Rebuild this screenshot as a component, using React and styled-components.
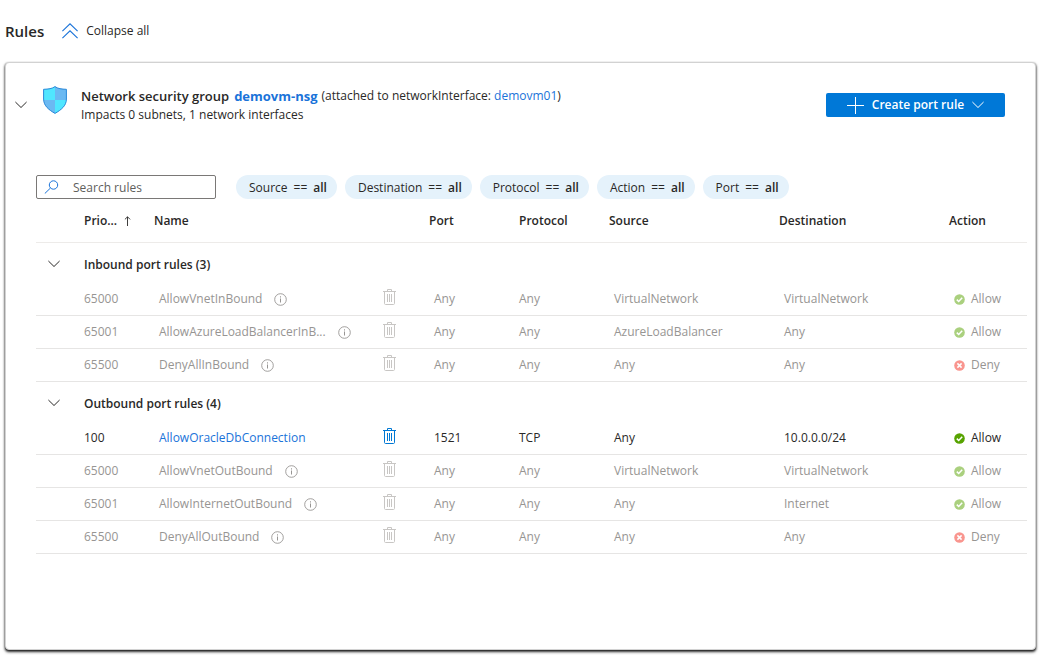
import { Fragment, useState } from 'react';
import { createGlobalStyle, styled } from 'styled-components';

const GlobalStyle = createGlobalStyle`
  *, *::before, *::after {
    box-sizing: border-box;
  }

  body {
    margin: 0;
    background: #fff;
    color: #292827;
    font-family: 'Open Sans', 'Noto Sans', sans-serif;
    font-size: 12px;
    line-height: 18px;
  }

  button, input {
    font: inherit;
    color: inherit;
  }

  svg {
    display: block;
    flex-shrink: 0;
  }
`;

const Page = styled.main`
  display: flex;
  flex-direction: column;
  min-height: 100vh;
  padding: 0 5px 5px;
`;

const TopBar = styled.header`
  display: flex;
  align-items: center;
  gap: 18px;
  height: 61px;
  margin-bottom: 1px;
`;

const Title = styled.h1`
  margin: 0;
  font-size: 15px;
  font-weight: 600;
`;

const PlainButton = styled.button`
  display: inline-flex;
  align-items: center;
  gap: 8px;
  padding: 0;
  border: none;
  background: none;
  cursor: pointer;

  &:disabled {
    cursor: default;
  }
`;

const Card = styled.section`
  flex: 1;
  padding: 23px 8px 24px 9px;
  border: 1px solid #d2d2d2;
  border-radius: 4px;
  background: #fff;
  box-shadow: 0 1px 2px rgba(0, 0, 0, 0.6), 0 2px 3px rgba(0, 0, 0, 0.75);
`;

const GroupHeader = styled.div`
  display: flex;
  align-items: flex-start;
  padding-right: 22px;
`;

const ExpandButton = styled(PlainButton)`
  height: 38px;
  margin-right: 16px;
`;

const GroupText = styled.div`
  flex: 1;
  margin-left: 14px;
`;

const GroupTitle = styled.h2`
  display: flex;
  flex-wrap: wrap;
  column-gap: 4px;
  margin: 0;
  font-size: 12px;
  font-weight: 400;
  line-height: 20px;
`;

const GroupName = styled.strong`
  display: flex;
  gap: 5px;
  font-size: 13px;
  font-weight: 600;
`;

const GroupSummary = styled.p`
  margin: 0;
`;

const Link = styled.a`
  color: #1a73d9;
  text-decoration: none;

  &:hover {
    text-decoration: underline;
  }
`;

const StrongLink = styled(Link)`
  font-weight: 700;
`;

const CreateButton = styled.button`
  display: flex;
  align-items: center;
  justify-content: center;
  gap: 8px;
  width: 179px;
  height: 24px;
  margin-top: 7px;
  padding: 0;
  border: none;
  border-radius: 2px;
  background: #0078d7;
  color: #fff;
  font-weight: 600;
  cursor: pointer;
`;

const RulesArea = styled.div`
  padding: 51px 0 0 21px;
`;

const Toolbar = styled.div`
  display: flex;
  flex-wrap: wrap;
  gap: 8px;
`;

const SearchBox = styled.label`
  display: flex;
  align-items: center;
  gap: 14px;
  width: 180px;
  height: 24px;
  margin-right: 12px;
  padding: 0 7px;
  border: 1px solid #7a7876;
  border-radius: 2px;
`;

const SearchInput = styled.input`
  flex: 1;
  min-width: 0;
  padding: 2px 0 0;
  border: none;
  outline: none;
  background: none;

  &::placeholder {
    color: #605e5c;
    opacity: 1;
  }
`;

const Pill = styled.button`
  display: flex;
  align-items: center;
  gap: 6px;
  height: 24px;
  padding: 2px 10px 0 13px;
  border: none;
  border-radius: 12px;
  background: #e5f2fb;
  cursor: pointer;

  strong {
    font-weight: 600;
  }
`;

const Table = styled.table`
  width: 100%;
  border-collapse: separate;
  border-spacing: 0;
  table-layout: fixed;
`;

const Col = styled.col`
  width: ${({ $width }) => ($width ? `${$width}px` : 'auto')};
`;

const HeadCell = styled.th`
  height: 44px;
  padding: 0;
  border-bottom: 1px solid #edebe9;
  font-weight: 600;
  text-align: left;
  white-space: nowrap;
`;

const SortLabel = styled.span`
  display: flex;
  align-items: center;
  gap: 7px;
`;

const SectionCell = styled.th`
  height: 40px;
  padding: 4px 0 0;
  font-weight: 600;
  text-align: left;
`;

const ChevronCell = styled.td`
  height: 40px;
  padding: 2px 0 0 12px;
`;

const Row = styled.tr`
  color: ${({ $muted }) => ($muted ? '#979593' : '#292827')};
`;

const Cell = styled.td`
  height: 33px;
  padding: 0 0 0 ${({ $flush }) => ($flush ? 0 : 5)}px;
  border-bottom: 1px solid #e6e5e4;
  white-space: nowrap;
`;

const NameLabel = styled.span`
  display: flex;
  align-items: center;
  gap: 12px;
`;

const DeleteButton = styled(PlainButton)`
  display: flex;
  margin-bottom: 4px;
  color: ${({ disabled }) => (disabled ? '#c8c6c4' : '#0078d4')};
`;

const ActionLabel = styled.span`
  display: flex;
  align-items: center;
  gap: 6px;

  svg {
    opacity: ${({ $muted }) => ($muted ? 0.5 : 1)};
  }
`;

const MAX_NAME_LENGTH = 25;

const FILTERS = ['Source', 'Destination', 'Protocol', 'Action', 'Port'];

const SECTIONS = [
  {
    id: 'inbound',
    title: 'Inbound port rules',
    rules: [
      { priority: 65000, name: 'AllowVnetInBound', port: 'Any', protocol: 'Any', source: 'VirtualNetwork', destination: 'VirtualNetwork', action: 'Allow', isDefault: true },
      { priority: 65001, name: 'AllowAzureLoadBalancerInBound', port: 'Any', protocol: 'Any', source: 'AzureLoadBalancer', destination: 'Any', action: 'Allow', isDefault: true },
      { priority: 65500, name: 'DenyAllInBound', port: 'Any', protocol: 'Any', source: 'Any', destination: 'Any', action: 'Deny', isDefault: true },
    ],
  },
  {
    id: 'outbound',
    title: 'Outbound port rules',
    rules: [
      { priority: 100, name: 'AllowOracleDbConnection', port: '1521', protocol: 'TCP', source: 'Any', destination: '10.0.0.0/24', action: 'Allow', isDefault: false },
      { priority: 65000, name: 'AllowVnetOutBound', port: 'Any', protocol: 'Any', source: 'VirtualNetwork', destination: 'VirtualNetwork', action: 'Allow', isDefault: true },
      { priority: 65001, name: 'AllowInternetOutBound', port: 'Any', protocol: 'Any', source: 'Any', destination: 'Internet', action: 'Allow', isDefault: true },
      { priority: 65500, name: 'DenyAllOutBound', port: 'Any', protocol: 'Any', source: 'Any', destination: 'Any', action: 'Deny', isDefault: true },
    ],
  },
];

function shorten(name) {
  return name.length > MAX_NAME_LENGTH ? `${name.slice(0, MAX_NAME_LENGTH)}...` : name;
}

function ChevronIcon({ open = true }) {
  return (
    <svg width="12" height="8" viewBox="0 0 12 8" fill="none" stroke="currentColor" aria-hidden="true">
      <path d={open ? 'M.4 1 6 6.5 11.6 1' : 'M.4 7 6 1.5 11.6 7'} />
    </svg>
  );
}

function CollapseIcon() {
  return (
    <svg width="16" height="16" viewBox="0 0 16 16" fill="none" stroke="#1a73d9" strokeWidth="1.1" aria-hidden="true">
      <path d="M.4 8.2 8 .8l7.6 7.4M.4 15.2 8 7.8l7.6 7.4" />
    </svg>
  );
}

function ShieldIcon() {
  return (
    <svg width="24" height="28" viewBox="0 0 24 28" aria-hidden="true">
      <defs>
        <clipPath id="shield">
          <path d="M12 .5c3 2.2 6.5 2.5 11.5 2.7V13c0 7-5.5 11-11.5 14.5C6 24 .5 20 .5 13V3.2C5.5 3 9 2.7 12 .5Z" />
        </clipPath>
      </defs>
      <g clipPath="url(#shield)">
        <path fill="#50e6ff" d="M0 0h12v14H0zM12 14h12v14H12z" />
        <path fill="#6bb9f2" d="M12 0h12v14H12zM0 14h12v14H0z" />
      </g>
      <path
        fill="none"
        stroke="#2b88d8"
        d="M12 .6c3 2.2 6.5 2.5 11.4 2.7V13c0 7-5.4 10.9-11.4 14.4C6 23.9.6 20 .6 13V3.3C5.5 3.1 9 2.8 12 .6Z"
      />
    </svg>
  );
}

function PlusIcon() {
  return (
    <svg width="17" height="17" viewBox="0 0 17 17" stroke="currentColor" aria-hidden="true">
      <path d="M8.5 0v17M0 8.5h17" />
    </svg>
  );
}

function SearchIcon() {
  return (
    <svg width="15" height="14" viewBox="0 0 15 14" fill="none" stroke="#1a73d9" aria-hidden="true">
      <circle cx="9.5" cy="5" r="4.2" />
      <path d="M6.5 8 .8 13.5" />
    </svg>
  );
}

function SortIcon() {
  return (
    <svg width="7" height="10" viewBox="0 0 7 10" fill="none" stroke="currentColor" strokeWidth=".9" aria-hidden="true">
      <path d="M3.5 10V.8M.9 3.4 3.5.8l2.6 2.6" />
    </svg>
  );
}

function InfoIcon() {
  return (
    <svg width="13" height="13" viewBox="0 0 13 13" aria-hidden="true">
      <circle cx="6.5" cy="6.5" r="5.8" fill="none" stroke="currentColor" strokeWidth=".9" />
      <path d="M6.5 5.5v4M6.5 3.3v1.2" stroke="currentColor" />
    </svg>
  );
}

function TrashIcon() {
  return (
    <svg width="13" height="16" viewBox="0 0 13 16" fill="none" stroke="currentColor" aria-hidden="true">
      <path d="M0 2.5h13M4.5 2.5v-2h4v2M1.5 2.5v12c0 .6.4 1 1 1h8c.6 0 1-.4 1-1v-12M4.5 5v8M6.5 5v8M8.5 5v8" />
    </svg>
  );
}

function StatusIcon({ action }) {
  const allowed = action === 'Allow';

  return (
    <svg width="11" height="11" viewBox="0 0 11 11" fill="none" aria-hidden="true">
      <circle cx="5.5" cy="5.5" r="5.3" fill={allowed ? '#57a300' : '#f52d20'} />
      <path
        d={allowed ? 'M2.8 5.6 4.7 7.5 8.2 3.7' : 'M3.4 3.4l4.2 4.2M7.6 3.4 3.4 7.6'}
        stroke="#fff"
        strokeWidth="1.5"
      />
    </svg>
  );
}

function RuleRow({ rule }) {
  return (
    <Row $muted={rule.isDefault}>
      <Cell />
      <Cell $flush>{rule.priority}</Cell>
      <Cell>
        <NameLabel title={rule.name}>
          {rule.isDefault ? <span>{shorten(rule.name)}</span> : <Link href="#rule">{shorten(rule.name)}</Link>}
          {rule.isDefault && <InfoIcon />}
        </NameLabel>
      </Cell>
      <Cell>
        <DeleteButton type="button" aria-label={`Delete ${rule.name}`} disabled={rule.isDefault}>
          <TrashIcon />
        </DeleteButton>
      </Cell>
      <Cell>{rule.port}</Cell>
      <Cell $flush>{rule.protocol}</Cell>
      <Cell>{rule.source}</Cell>
      <Cell>{rule.destination}</Cell>
      <Cell>
        <ActionLabel $muted={rule.isDefault}>
          <StatusIcon action={rule.action} />
          {rule.action}
        </ActionLabel>
      </Cell>
    </Row>
  );
}

export default function App() {
  const [expanded, setExpanded] = useState(true);
  const [openSections, setOpenSections] = useState({ inbound: true, outbound: true });
  const [query, setQuery] = useState('');

  function toggleSection(id) {
    setOpenSections((prev) => ({ ...prev, [id]: !prev[id] }));
  }

  function matchesQuery(rule) {
    return rule.name.toLowerCase().includes(query.trim().toLowerCase());
  }

  return (
    <Page>
      <GlobalStyle />
      <TopBar>
        <Title>Rules</Title>
        <PlainButton type="button" onClick={() => setExpanded(false)}>
          <CollapseIcon />
          Collapse all
        </PlainButton>
      </TopBar>

      <Card>
        <GroupHeader>
          <ExpandButton type="button" aria-label="Toggle group" onClick={() => setExpanded(!expanded)}>
            <ChevronIcon open={expanded} />
          </ExpandButton>
          <ShieldIcon />
          <GroupText>
            <GroupTitle>
              <GroupName>
                Network security group <StrongLink href="#nsg">demovm-nsg</StrongLink>
              </GroupName>
              <span>
                (attached to networkInterface: <Link href="#nic">demovm01</Link>)
              </span>
            </GroupTitle>
            <GroupSummary>Impacts 0 subnets, 1 network interfaces</GroupSummary>
          </GroupText>
          <CreateButton type="button">
            <PlusIcon />
            Create port rule
            <ChevronIcon />
          </CreateButton>
        </GroupHeader>

        {expanded && (
          <RulesArea>
            <Toolbar>
              <SearchBox>
                <SearchIcon />
                <SearchInput
                  type="text"
                  aria-label="Search rules"
                  placeholder="Search rules"
                  value={query}
                  onChange={(event) => setQuery(event.target.value)}
                />
              </SearchBox>
              {FILTERS.map((filter) => (
                <Pill key={filter} type="button">
                  <span>{filter}</span>
                  <span>==</span>
                  <strong>all</strong>
                </Pill>
              ))}
            </Toolbar>

            <Table>
              <colgroup>
                <Col $width={48} />
                <Col $width={70} />
                <Col />
                <Col $width={51} />
                <Col $width={90} />
                <Col $width={90} />
                <Col $width={170} />
                <Col $width={170} />
                <Col $width={78} />
              </colgroup>
              <thead>
                <tr>
                  <HeadCell />
                  <HeadCell>
                    <SortLabel>
                      Prio...
                      <SortIcon />
                    </SortLabel>
                  </HeadCell>
                  <HeadCell>Name</HeadCell>
                  <HeadCell />
                  <HeadCell>Port</HeadCell>
                  <HeadCell>Protocol</HeadCell>
                  <HeadCell>Source</HeadCell>
                  <HeadCell>Destination</HeadCell>
                  <HeadCell>Action</HeadCell>
                </tr>
              </thead>
              <tbody>
                {SECTIONS.map((section) => (
                  <Fragment key={section.id}>
                    <tr>
                      <ChevronCell>
                        <PlainButton
                          type="button"
                          aria-label={`Toggle ${section.title}`}
                          onClick={() => toggleSection(section.id)}
                        >
                          <ChevronIcon open={openSections[section.id]} />
                        </PlainButton>
                      </ChevronCell>
                      <SectionCell colSpan={8}>
                        {section.title} ({section.rules.length})
                      </SectionCell>
                    </tr>
                    {openSections[section.id] &&
                      section.rules.filter(matchesQuery).map((rule) => <RuleRow key={rule.name} rule={rule} />)}
                  </Fragment>
                ))}
              </tbody>
            </Table>
          </RulesArea>
        )}
      </Card>
    </Page>
  );
}
